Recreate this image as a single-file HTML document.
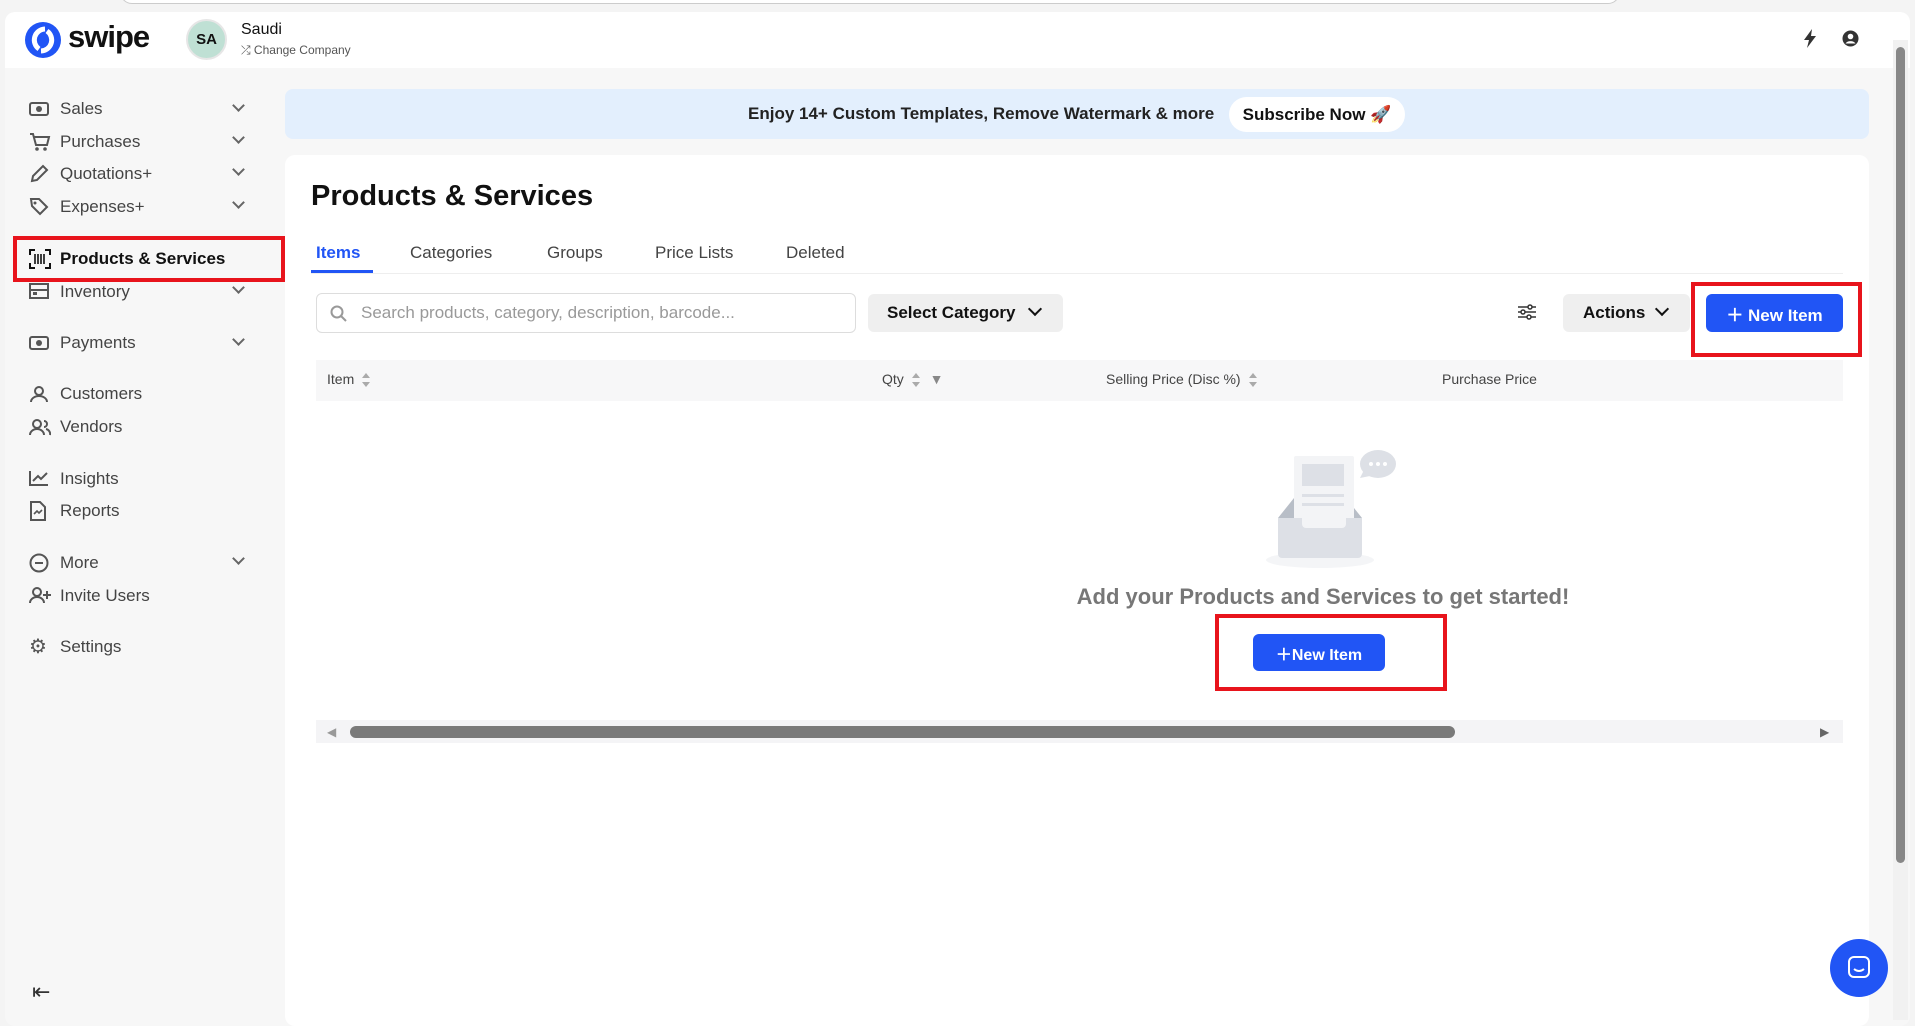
<!DOCTYPE html>
<html><head><meta charset="utf-8"><style>
*{box-sizing:border-box;margin:0;padding:0}
body{width:1915px;height:1026px;overflow:hidden;background:#f4f4f4;font-family:"Liberation Sans",sans-serif;position:relative;color:#111}
.a{position:absolute}
.side{color:#444;font-size:17px}
.side .t{position:absolute;left:60px}
.side svg{position:absolute;left:29px}
.chev{position:absolute;left:234px;width:9px;height:9px;border-right:2px solid #666;border-bottom:2px solid #666;transform:rotate(45deg)}
.tab{position:absolute;top:243px;font-size:17px;color:#444}
.th{position:absolute;top:371px;font-size:14px;color:#444}
.btn{position:absolute;background:#2155f5;color:#fff;font-weight:bold;border-radius:6px;display:flex;align-items:center;justify-content:center}
.sort{display:inline-block;vertical-align:middle;margin-left:8px;width:8px;height:14px;position:relative}
.sort:before{content:"";position:absolute;left:0;top:0;border:4px solid transparent;border-bottom:5px solid #aaa;border-top:0}
.sort:after{content:"";position:absolute;left:0;bottom:0;border:4px solid transparent;border-top:5px solid #aaa;border-bottom:0}
</style></head><body>
<div class="a" style="left:120px;top:-20px;width:1500px;height:24px;border:1px solid #ccc;border-radius:12px;background:#fff"></div>
<div class="a" style="left:5px;top:12px;width:1905px;height:1014px;background:#f7f7f7;border-radius:10px"></div>
<div class="a" style="left:5px;top:12px;width:1905px;height:56px;background:#fff;border-radius:10px 10px 0 0"></div>
<svg class="a" style="left:24px;top:21px" width="38" height="38" viewBox="0 0 38 38"><circle cx="19" cy="19" r="18" fill="#2155f5"/><path d="M21 8 a11 11 0 0 0 -6 20" stroke="#fff" stroke-width="5" fill="none"/><path d="M17 30 a11 11 0 0 0 6 -20" stroke="#fff" stroke-width="5" fill="none"/></svg>
<div class="a" style="left:68px;top:19px;font-size:31px;font-weight:bold;letter-spacing:-1px">swipe</div>
<div class="a" style="left:186px;top:19px;width:41px;height:41px;border-radius:50%;background:#bfe0d4;border:2px solid #e6e6e6;font-size:15px;font-weight:bold;display:flex;align-items:center;justify-content:center">SA</div>
<div class="a" style="left:241px;top:21px;font-size:16px">Saudi</div>
<div class="a" style="left:241px;top:43px;font-size:12px;color:#555">⤮ Change Company</div>
<svg class="a" style="left:1803px;top:29px" width="14" height="19" viewBox="0 0 14 19"><path d="M9 0L1 11h5l-2 8 9-12H8z" fill="#333"/></svg>
<svg class="a" style="left:1842px;top:30px" width="17" height="17" viewBox="0 0 17 17"><circle cx="8.5" cy="8.5" r="8" fill="#333"/><circle cx="8.5" cy="6.5" r="2.8" fill="#fff"/><path d="M3.5 13.5 a5.5 4 0 0 1 10 0" fill="#fff"/></svg>
<div class="side">
<svg style="top:101px" width="20" height="16"><rect x="1" y="2" width="18" height="12" rx="2" fill="none" stroke="#555" stroke-width="2"/><circle cx="10" cy="8" r="3" fill="#555"/></svg><div class="t" style="top:99px">Sales</div><div class="chev" style="top:101px"></div>
<svg style="top:132px" width="22" height="20"><path d="M1 2h3l3 11h11l2-8H5" fill="none" stroke="#555" stroke-width="2"/><circle cx="8" cy="17" r="1.8" fill="#555"/><circle cx="16" cy="17" r="1.8" fill="#555"/></svg><div class="t" style="top:132px">Purchases</div><div class="chev" style="top:133px"></div>
<svg style="top:164px" width="20" height="20"><path d="M3 17l1-5L14 2l4 4L8 16z" fill="none" stroke="#555" stroke-width="2"/></svg><div class="t" style="top:164px">Quotations+</div><div class="chev" style="top:165px"></div>
<svg style="top:197px" width="20" height="20"><path d="M2 2h8l8 8-7 7-8-8z" fill="none" stroke="#555" stroke-width="2"/><circle cx="6" cy="6" r="1.5" fill="#555"/></svg><div class="t" style="top:197px">Expenses+</div><div class="chev" style="top:198px"></div>
<svg style="top:249px" width="22" height="20"><path d="M1 6V1h5M16 1h5v5M21 14v5h-5M6 19H1v-5" stroke="#111" stroke-width="2" fill="none"/><path d="M6 5v10M9 5v10M12 5v10M15 5v10" stroke="#111" stroke-width="1.6"/></svg>
<div class="t" style="top:249px;color:#111;font-weight:bold">Products &amp; Services</div>
<svg style="top:283px" width="20" height="16"><rect x="1" y="1" width="18" height="14" fill="none" stroke="#555" stroke-width="2"/><path d="M1 7h18" stroke="#555" stroke-width="2"/><rect x="4" y="9" width="4" height="3" fill="#555"/></svg><div class="t" style="top:282px">Inventory</div><div class="chev" style="top:283px"></div>
<svg style="top:335px" width="20" height="16"><rect x="1" y="2" width="18" height="12" rx="2" fill="none" stroke="#555" stroke-width="2"/><circle cx="10" cy="8" r="3" fill="#555"/></svg><div class="t" style="top:333px">Payments</div><div class="chev" style="top:335px"></div>
<svg style="top:385px" width="20" height="18"><circle cx="10" cy="6" r="4" fill="none" stroke="#555" stroke-width="2"/><path d="M2 17a8 6 0 0 1 16 0" fill="none" stroke="#555" stroke-width="2"/></svg><div class="t" style="top:384px">Customers</div>
<svg style="top:418px" width="22" height="18"><circle cx="8" cy="6" r="4" fill="none" stroke="#555" stroke-width="2"/><path d="M1 17a7 6 0 0 1 14 0M15 3a3 3 0 0 1 0 6M17 11a5 5 0 0 1 4 6" fill="none" stroke="#555" stroke-width="2"/></svg><div class="t" style="top:417px">Vendors</div>
<svg style="top:470px" width="20" height="16"><path d="M1 1v14h18M4 11l5-5 3 3 6-6" fill="none" stroke="#555" stroke-width="2"/></svg><div class="t" style="top:469px">Insights</div>
<svg style="top:501px" width="18" height="20"><path d="M2 1h9l5 5v13H2z" fill="none" stroke="#555" stroke-width="2"/><path d="M5 13l3 -3 2 2 3-3" fill="none" stroke="#555" stroke-width="1.6"/></svg><div class="t" style="top:501px">Reports</div>
<svg style="top:553px" width="20" height="20"><circle cx="10" cy="10" r="8.5" fill="none" stroke="#555" stroke-width="2"/><path d="M6 10h8" stroke="#555" stroke-width="2"/></svg><div class="t" style="top:553px">More</div><div class="chev" style="top:554px"></div>
<svg style="top:586px" width="22" height="18"><circle cx="8" cy="6" r="4" fill="none" stroke="#555" stroke-width="2"/><path d="M1 17a7 6 0 0 1 14 0M18 5v8M14 9h8" fill="none" stroke="#555" stroke-width="2"/></svg><div class="t" style="top:586px">Invite Users</div>
<div class="a" style="left:29px;top:634px;font-size:20px;color:#555">⚙</div><div class="t" style="top:637px">Settings</div>
<div class="a" style="left:32px;top:979px;font-size:22px;color:#333">⇤</div>
</div>
<div class="a" style="left:13px;top:236px;width:272px;height:46px;border:4px solid #e8141c"></div>
<div class="a" style="left:285px;top:89px;width:1584px;height:50px;background:#e3effd;border-radius:8px"></div>
<div class="a" style="left:748px;top:104px;font-size:17px;font-weight:bold;color:#222">Enjoy 14+ Custom Templates, Remove Watermark &amp; more</div>
<div class="a" style="left:1229px;top:97px;width:176px;height:35px;background:#fff;border-radius:18px;font-size:17px;font-weight:bold;display:flex;align-items:center;justify-content:center">Subscribe Now 🚀</div>
<div class="a" style="left:285px;top:155px;width:1584px;height:871px;background:#fff;border-radius:10px"></div>
<div class="a" style="left:311px;top:180px;font-size:29px;font-weight:bold">Products &amp; Services</div>
<div class="a" style="left:311px;top:273px;width:1532px;height:1px;background:#eee"></div>
<div class="tab" style="left:316px;color:#2155f5;font-weight:bold">Items</div>
<div class="a" style="left:311px;top:270px;width:62px;height:3px;background:#2155f5"></div>
<div class="tab" style="left:410px">Categories</div>
<div class="tab" style="left:547px">Groups</div>
<div class="tab" style="left:655px">Price Lists</div>
<div class="tab" style="left:786px">Deleted</div>
<div class="a" style="left:316px;top:293px;width:540px;height:40px;border:1px solid #ddd;border-radius:6px"></div>
<svg class="a" style="left:330px;top:305px" width="17" height="17"><circle cx="7" cy="7" r="5.5" fill="none" stroke="#999" stroke-width="2"/><path d="M11 11l5 5" stroke="#999" stroke-width="2"/></svg>
<div class="a" style="left:361px;top:303px;font-size:17px;color:#999">Search products, category, description, barcode...</div>
<div class="a" style="left:868px;top:294px;width:195px;height:38px;background:#efefef;border-radius:6px;font-size:17px;font-weight:bold;display:flex;align-items:center;padding-left:19px">Select Category</div>
<div class="a" style="left:1030px;top:304px;width:10px;height:10px;border-right:2px solid #111;border-bottom:2px solid #111;transform:rotate(45deg)"></div>
<svg class="a" style="left:1517px;top:303px" width="20" height="18"><path d="M1 4h18M1 9h18M1 14h18" stroke="#333" stroke-width="1.5"/><circle cx="13" cy="4" r="2" fill="#fff" stroke="#333" stroke-width="1.5"/><circle cx="6" cy="9" r="2" fill="#fff" stroke="#333" stroke-width="1.5"/><circle cx="12" cy="14" r="2" fill="#fff" stroke="#333" stroke-width="1.5"/></svg>
<div class="a" style="left:1563px;top:294px;width:127px;height:38px;background:#efefef;border-radius:6px;font-size:17px;font-weight:bold;display:flex;align-items:center;padding-left:20px">Actions</div>
<div class="a" style="left:1657px;top:304px;width:10px;height:10px;border-right:2px solid #111;border-bottom:2px solid #111;transform:rotate(45deg)"></div>
<div class="btn" style="left:1706px;top:294px;width:137px;height:38px;font-size:17px">＋ New Item</div>
<div class="a" style="left:1691px;top:282px;width:171px;height:75px;border:4px solid #e8141c"></div>
<div class="a" style="left:316px;top:360px;width:1527px;height:41px;background:#f7f7f8"></div>
<div class="th" style="left:327px">Item<span class="sort"></span></div>
<div class="th" style="left:882px">Qty<span class="sort"></span> <span style="color:#888;margin-left:6px">▼</span></div>
<div class="th" style="left:1106px">Selling Price (Disc %)<span class="sort"></span></div>
<div class="th" style="left:1442px">Purchase Price</div>
<svg class="a" style="left:1266px;top:448px" width="136" height="122" viewBox="0 0 136 122"><ellipse cx="54" cy="112" rx="54" ry="8" fill="#f4f5f7"/><path d="M12 70l16-20h52l16 20z" fill="#b8bec7"/><rect x="28" y="8" width="60" height="74" rx="2" fill="#f3f4f6"/><rect x="36" y="16" width="42" height="22" fill="#dde0e6"/><rect x="36" y="46" width="42" height="3" fill="#dde0e6"/><rect x="36" y="55" width="42" height="3" fill="#dde0e6"/><path d="M12 70h24v6a4 4 0 0 0 4 4h36a4 4 0 0 0 4-4v-6h16v36a4 4 0 0 1-4 4H16a4 4 0 0 1-4-4z" fill="#dde0e6"/><ellipse cx="112" cy="16" rx="18" ry="14" fill="#dde0e6"/><path d="M94 30l4-8 6 6z" fill="#dde0e6"/><circle cx="105" cy="16" r="2" fill="#fff"/><circle cx="112" cy="16" r="2" fill="#fff"/><circle cx="119" cy="16" r="2" fill="#fff"/></svg>
<div class="a" style="left:1023px;top:584px;width:600px;text-align:center;font-size:22px;font-weight:bold;color:#777">Add your Products and Services to get started!</div>
<div class="btn" style="left:1253px;top:634px;width:132px;height:37px;font-size:16px">＋New Item</div>
<div class="a" style="left:1215px;top:614px;width:232px;height:77px;border:4px solid #e8141c"></div>
<div class="a" style="left:316px;top:720px;width:1527px;height:23px;background:#f4f4f6"></div>
<div class="a" style="left:327px;top:725px;font-size:12px;color:#999">◀</div>
<div class="a" style="left:1820px;top:725px;font-size:12px;color:#666">▶</div>
<div class="a" style="left:350px;top:726px;width:1105px;height:12px;background:#7a7a7a;border-radius:6px"></div>
<div class="a" style="left:1893px;top:40px;width:15px;height:980px;background:#f1f1f1"></div>
<div class="a" style="left:1896px;top:47px;width:9px;height:816px;background:#888;border-radius:5px"></div>
<div class="a" style="left:1830px;top:939px;width:58px;height:58px;border-radius:50%;background:#2155f5"></div>
<svg class="a" style="left:1848px;top:956px" width="22" height="24"><rect x="1" y="1" width="20" height="20" rx="5" fill="none" stroke="#fff" stroke-width="2"/><path d="M6 13q5 4 10 0" fill="none" stroke="#fff" stroke-width="2"/></svg>
</body></html>
